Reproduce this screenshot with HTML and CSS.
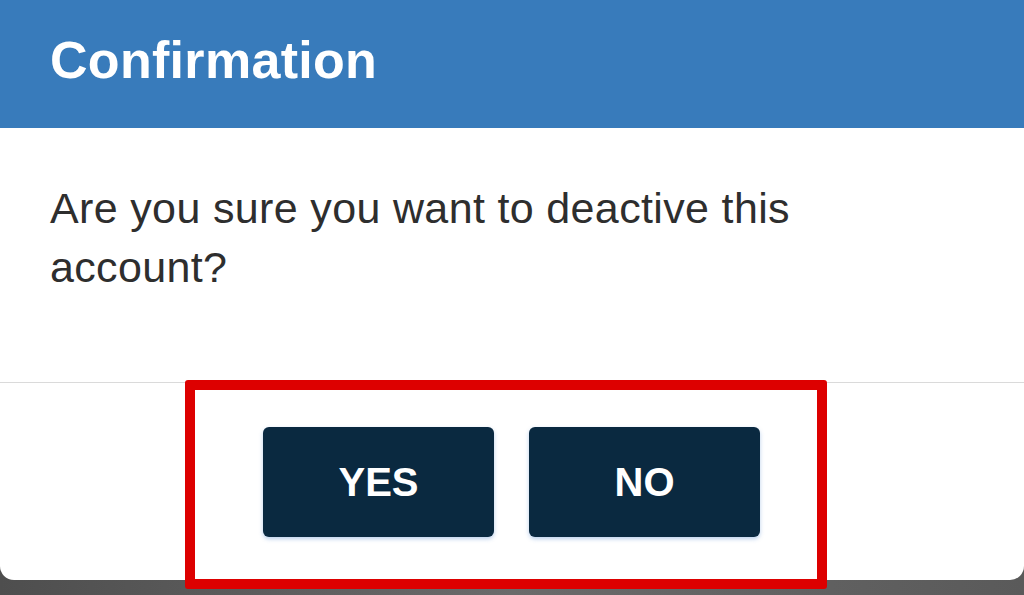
FILE: index.html
```html
<!DOCTYPE html>
<html>
<head>
<meta charset="utf-8">
<link rel="stylesheet" href="styles.css">
</head>
<body>
<div class="dialog">
  <div class="header"><h1 class="title">Confirmation</h1></div>
  <div class="content">
    <p class="message">Are you sure you want to deactive this account?</p>
  </div>
  <div class="footer">
    <div class="highlight">
      <button class="btn">YES</button>
      <button class="btn">NO</button>
    </div>
  </div>
</div>
</body>
</html>
```
FILE: styles.css
```css
html, body {
  margin: 0;
  padding: 0;
}
body {
  width: 1024px;
  height: 595px;
  overflow: hidden;
  background: linear-gradient(90deg, #4e4e4e 0%, #6a6a6a 50%, #5a5a5a 100%);
  font-family: "Liberation Sans", Arial, sans-serif;
}
.dialog {
  width: 1024px;
  height: 580px;
  background: #ffffff;
  border-radius: 0 0 14px 14px;
  display: flex;
  flex-direction: column;
}
.header {
  height: 128px;
  background: #387bbb;
  display: flex;
  align-items: flex-start;
  padding: 34px 0 0 50px;
  box-sizing: border-box;
  flex: none;
}
.title {
  margin: 0;
  color: #ffffff;
  font-size: 52px;
  line-height: 52px;
  font-weight: bold;
  letter-spacing: 0.3px;
}
.content {
  height: 255px;
  flex: none;
  box-sizing: border-box;
  padding: 51px 0 0 50px;
  border-bottom: 1px solid #dadada;
}
.message {
  margin: 0;
  width: 800px;
  color: #2e2e2e;
  font-size: 43px;
  line-height: 59px;
  letter-spacing: 0.35px;
}
.footer {
  flex: 1;
  display: flex;
  align-items: flex-start;
  padding-left: 185px;
}
.highlight {
  margin-top: -3px;
  width: 642px;
  height: 209px;
  box-sizing: border-box;
  border: 10px solid #dd0000;
  border-radius: 3px;
  display: flex;
  gap: 35px;
  padding: 37px 0 0 68px;
}
.btn {
  width: 231px;
  height: 110px;
  border: none;
  border-radius: 6px;
  background: #0a2940;
  color: #ffffff;
  font-family: "Liberation Sans", Arial, sans-serif;
  font-size: 40px;
  font-weight: bold;
  box-shadow: 0 2px 4px rgba(60, 120, 200, 0.35);
  padding: 0;
}
```
